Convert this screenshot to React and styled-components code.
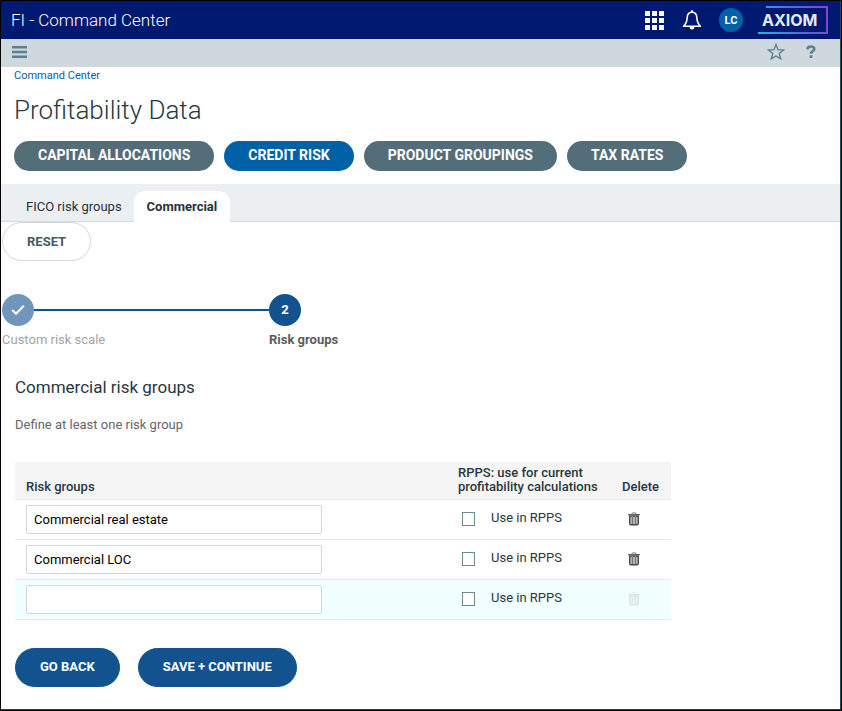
import React, { useState } from "react";
import styled, { createGlobalStyle } from "styled-components";

const GlobalStyle = createGlobalStyle`
  *, *::before, *::after { box-sizing: border-box; }
  html, body { margin: 0; background: #fff; }
  body, button, input { font-family: Roboto, "Liberation Sans", sans-serif; }
  button { cursor: pointer; margin: 0; }
`;

const Page = styled.div`
  min-height: 100vh;
  border: 1px solid #000;
  box-shadow: inset -1px -1px 0 #1c4966;
  padding: 0 1px 1px 0;
  color: #263840;
  font-size: 13px;
`;

const TopBar = styled.header`
  display: flex;
  align-items: center;
  justify-content: space-between;
  height: 38px;
  padding: 0 12px 0 10px;
  background: #001970;
  color: #fff;
`;

const Product = styled.span`
  font-size: 17px;
  font-weight: 300;
  line-height: 20px;
`;

const Actions = styled.div`
  display: flex;
  align-items: center;
`;

const IconButton = styled.button`
  display: flex;
  align-items: center;
  justify-content: center;
  width: ${(p) => p.$width}px;
  height: 24px;
  padding: 0;
  border: 0;
  background: none;
  color: inherit;

  &:disabled { opacity: 0.15; cursor: default; }
`;

const Avatar = styled.button`
  width: 24px;
  height: 24px;
  margin: 0 15px 0 8px;
  padding: 0;
  border: 0;
  border-radius: 50%;
  background: #0061a6;
  color: #fff;
  font-size: 11px;
  font-weight: 700;
`;

const ToolBar = styled.div`
  display: flex;
  align-items: center;
  justify-content: space-between;
  height: 28px;
  padding: 0 12px 2px 7px;
  background: #cfd8dd;
  color: #5d7f90;
`;

const PageHead = styled.div`
  padding: 0 13px 13px;
`;

const Breadcrumb = styled.nav`
  padding-top: 1px;
  font-size: 11px;
  line-height: 16px;

  a { color: #0d5c9c; text-decoration: none; }
`;

const Title = styled.h1`
  margin: 10px 0 14px;
  font-size: 26px;
  font-weight: 300;
  line-height: 33px;
`;

const PillRow = styled.nav`
  display: flex;
  flex-wrap: wrap;
  gap: 10px;
`;

const Pill = styled.button`
  height: 30px;
  padding: 0 24px 2px;
  border: 0;
  border-radius: 15px;
  background: ${(p) => (p.$active ? "#0061a6" : "#546e79")};
  color: #fff;
  font-size: 14px;
  font-weight: 700;
`;

const Tabs = styled.div`
  display: flex;
  align-items: flex-end;
  height: 38px;
  padding-left: 13px;
  background: #ebeff2;
  box-shadow: inset 0 -1px 0 #d3dadd;
`;

const Tab = styled.button`
  height: 31px;
  padding: 0 ${(p) => (p.$active ? 13 : 12)}px;
  border: 0;
  border-radius: 11px 11px 0 0;
  background: ${(p) => (p.$active ? "#fff" : "transparent")};
  color: #263238;
  font-size: 13px;
  font-weight: ${(p) => (p.$active ? 700 : 400)};
`;

const Button = styled.button`
  height: 39px;
  padding: 0 24px ${(p) => (p.$outline ? 0 : 2)}px;
  border: 1px solid ${(p) => (p.$outline ? "#cfd8dc" : "#11528f")};
  border-radius: 20px;
  background: ${(p) => (p.$outline ? "#fff" : "#11528f")};
  color: ${(p) => (p.$outline ? "#455a64" : "#fff")};
  font-size: 13px;
  font-weight: 700;
`;

const Wizard = styled.div`
  padding: 0 1px;
`;

const Steps = styled.ol`
  display: flex;
  margin: 33px 0 0;
  padding: 0;
  list-style: none;
`;

const Step = styled.li`
  width: ${(p) => (p.$last ? "auto" : "267px")};
  color: ${(p) => (p.$last ? "#5c5c5c" : "#a3a3a3")};
  font-weight: ${(p) => (p.$last ? 700 : 400)};
  line-height: 16px;
`;

const StepTrack = styled.div`
  display: flex;
  align-items: center;
  margin-bottom: 6px;

  &::after {
    content: "";
    flex: 1;
    height: 2px;
    background: ${(p) => (p.$last ? "transparent" : "#11528f")};
  }
`;

const StepMark = styled.span`
  display: flex;
  align-items: center;
  justify-content: center;
  width: 32px;
  height: 32px;
  border-radius: 50%;
  background: ${(p) => (p.$done ? "#7096bc" : "#11528f")};
  color: #fff;
`;

const Content = styled.main`
  padding: 27px 13px 21px;
`;

const Subtitle = styled.h2`
  margin: 0;
  font-size: 17px;
  font-weight: 400;
  line-height: 24px;
`;

const Hint = styled.p`
  margin: 17px 0 28px;
  color: #666;
  line-height: 18px;
`;

const Table = styled.table`
  width: 100%;
  max-width: 656px;
  table-layout: fixed;
  border-collapse: separate;
  border-spacing: 0;
`;

const HeadCell = styled.th`
  width: ${(p) => p.$width};
  height: 38px;
  padding: 0 11px 5px;
  border-bottom: 1px solid #e6eaee;
  background: #f5f5f5;
  font-weight: 500;
  line-height: 14px;
  text-align: left;
  vertical-align: bottom;
  white-space: nowrap;
`;

const Row = styled.tr`
  background: ${(p) => (p.$fresh ? "#f2ffff" : "#fff")};
`;

const Cell = styled.td`
  height: 40px;
  padding: 0 11px;
  border-bottom: 1px solid #e6eaee;
`;

const DeleteCell = styled(Cell)`
  padding-bottom: 2px;
`;

const TextBox = styled.input`
  display: block;
  width: 100%;
  max-width: 296px;
  height: 29px;
  padding: 0 7px;
  border: 1px solid #cfd8dc;
  border-radius: 2px;
  background: #fff;
  color: #000;
  font-size: 13px;
`;

const Check = styled.label`
  display: flex;
  align-items: center;
  gap: 16px;
  padding: 0 0 4px 4px;
  line-height: 16px;
`;

const Box = styled.input`
  appearance: none;
  width: 13px;
  height: 14px;
  margin: 2px 0 0;
  border: 1px solid #6c8b99;
  background: #fff;

  &:checked { background: #11528f; }
`;

const Footer = styled.div`
  display: flex;
  flex-wrap: wrap;
  gap: 18px;
  padding-top: 28px;
`;

const AppsIcon = () => (
  <svg width="19" height="19" viewBox="0 0 19 19" fill="currentColor" aria-hidden="true">
    {[0, 7, 14].map((y) => [0, 7, 14].map((x) => <rect key={`${x}-${y}`} x={x} y={y} width="5" height="5" />))}
  </svg>
);

const BellIcon = () => (
  <svg width="20" height="20" viewBox="0 0 20 20" aria-hidden="true">
    <path d="M10 2.200C7 2.200 5.300 4.300 5.200 7.500 5.100 11.500 4 13.700 1.600 16.200h16.800C16 13.700 14.900 11.500 14.800 7.500 14.700 4.300 13 2.200 10 2.200Z" fill="none" stroke="currentColor" strokeWidth="1.600" strokeLinejoin="round" />
    <circle cx="10" cy="1.600" r="1.300" fill="currentColor" />
    <path d="M7.600 17a2.400 2.500 0 0 0 4.800 0Z" fill="currentColor" />
  </svg>
);

const Logo = () => (
  <svg width="70" height="28" viewBox="0 0 70 28" role="img" aria-label="Axiom">
    <defs>
      <linearGradient id="frame" gradientUnits="userSpaceOnUse" x1="0" y1="27" x2="70" y2="0">
        <stop offset="0" stopColor="#19b9ee" />
        <stop offset="0.5" stopColor="#4d70dc" />
        <stop offset="1" stopColor="#8a3fd0" />
      </linearGradient>
    </defs>
    <path d="M8 1H69V27H0" fill="none" stroke="url(#frame)" strokeWidth="2" />
    <text x="4" y="20" fill="#e8e9f2" fontFamily="Inter, sans-serif" fontSize="16" fontWeight="700">AXIOM</text>
  </svg>
);

const MenuIcon = () => (
  <svg width="15" height="12" viewBox="0 0 15 12" fill="currentColor" aria-hidden="true">
    <path d="M0 0h15v2.500H0zM0 4.800h15v2.500H0zM0 9.500h15v2.500H0z" />
  </svg>
);

const StarIcon = () => (
  <svg width="18" height="18" viewBox="0 0 18 18" aria-hidden="true">
    <path d="m9 1.500 2 5.200 5.600.3-4.400 3.500 1.500 5.400L9 12.900l-4.700 3 1.500-5.400L1.400 7l5.600-.3Z" fill="none" stroke="currentColor" strokeWidth="1.300" strokeLinejoin="miter" />
  </svg>
);

const HelpIcon = () => (
  <svg width="10" height="14" viewBox="0 0 10 14" aria-hidden="true">
    <path d="M1.400 4.300C1.600 2.300 2.900 1.500 4.800 1.500c2.100 0 3.500.9 3.500 2.500C8.300 6 5 6.100 5 8.800" fill="none" stroke="currentColor" strokeWidth="2.600" />
    <rect x="3.600" y="10.300" width="2.800" height="2.700" fill="currentColor" />
  </svg>
);

const CheckIcon = () => (
  <svg width="14" height="12" viewBox="0 0 14 12" aria-hidden="true">
    <path d="m1.200 6 3.800 3.800L12.800 1.800" fill="none" stroke="currentColor" strokeWidth="2" />
  </svg>
);

const TrashIcon = () => (
  <svg width="12" height="14" viewBox="0 0 12 14" aria-hidden="true">
    <path d="M3.500 2.500Q3.500.8 6 .8t2.500 1.700" fill="none" stroke="#777" />
    <rect x="0" y="2" width="12" height="1.200" fill="#666" />
    <path d="M1.700 4v7.500q0 1.200 1.200 1.200h6.200q1.200 0 1.200-1.200V4Z" fill="#b5b5b5" stroke="#4a4a4a" strokeWidth="1.400" />
    <path d="M4.500 4v8M7.500 4v8" stroke="#777" strokeWidth="1" />
  </svg>
);

const sections = ["CAPITAL ALLOCATIONS", "CREDIT RISK", "PRODUCT GROUPINGS", "TAX RATES"];
const initialGroups = [
  { id: 1, name: "Commercial real estate" },
  { id: 2, name: "Commercial LOC" },
  { id: 3, name: "", fresh: true },
];

export default function App() {
  const [groups, setGroups] = useState(initialGroups);
  const rename = (id, name) => setGroups(groups.map((g) => (g.id === id ? { ...g, name } : g)));
  const remove = (id) => setGroups(groups.filter((g) => g.id !== id));

  return (
    <Page>
      <GlobalStyle />
      <TopBar>
        <Product>FI - Command Center</Product>
        <Actions>
          <IconButton $width={38} aria-label="Applications"><AppsIcon /></IconButton>
          <IconButton $width={38} aria-label="Notifications"><BellIcon /></IconButton>
          <Avatar>LC</Avatar>
          <Logo />
        </Actions>
      </TopBar>
      <ToolBar>
        <IconButton $width={23} aria-label="Menu"><MenuIcon /></IconButton>
        <Actions>
          <IconButton $width={35} aria-label="Favorite"><StarIcon /></IconButton>
          <IconButton $width={35} aria-label="Help"><HelpIcon /></IconButton>
        </Actions>
      </ToolBar>

      <PageHead>
        <Breadcrumb aria-label="Breadcrumb"><a href="#command-center">Command Center</a></Breadcrumb>
        <Title>Profitability Data</Title>
        <PillRow>
          {sections.map((s) => <Pill key={s} $active={s === "CREDIT RISK"}>{s}</Pill>)}
        </PillRow>
      </PageHead>

      <Tabs role="tablist">
        <Tab role="tab" aria-selected="false">FICO risk groups</Tab>
        <Tab role="tab" aria-selected="true" $active>Commercial</Tab>
      </Tabs>

      <Wizard>
        <Button $outline>RESET</Button>
        <Steps>
          <Step>
            <StepTrack><StepMark $done><CheckIcon /></StepMark></StepTrack>
            Custom risk scale
          </Step>
          <Step $last aria-current="step">
            <StepTrack $last><StepMark>2</StepMark></StepTrack>
            Risk groups
          </Step>
        </Steps>

        <Content>
          <Subtitle>Commercial risk groups</Subtitle>
          <Hint>Define at least one risk group</Hint>
          <Table>
            <thead>
              <tr>
                <HeadCell>Risk groups</HeadCell>
                <HeadCell $width="164px">RPPS: use for current<br />profitability calculations</HeadCell>
                <HeadCell $width="60px">Delete</HeadCell>
              </tr>
            </thead>
            <tbody>
              {groups.map((g) => (
                <Row key={g.id} $fresh={g.fresh}>
                  <Cell>
                    <TextBox aria-label="Risk group" value={g.name} onChange={(e) => rename(g.id, e.target.value)} />
                  </Cell>
                  <Cell><Check><Box type="checkbox" />Use in RPPS</Check></Cell>
                  <DeleteCell>
                    <IconButton $width={24} disabled={g.fresh} aria-label="Delete" onClick={() => remove(g.id)}>
                      <TrashIcon />
                    </IconButton>
                  </DeleteCell>
                </Row>
              ))}
            </tbody>
          </Table>
          <Footer>
            <Button>GO BACK</Button>
            <Button>SAVE + CONTINUE</Button>
          </Footer>
        </Content>
      </Wizard>
    </Page>
  );
}
